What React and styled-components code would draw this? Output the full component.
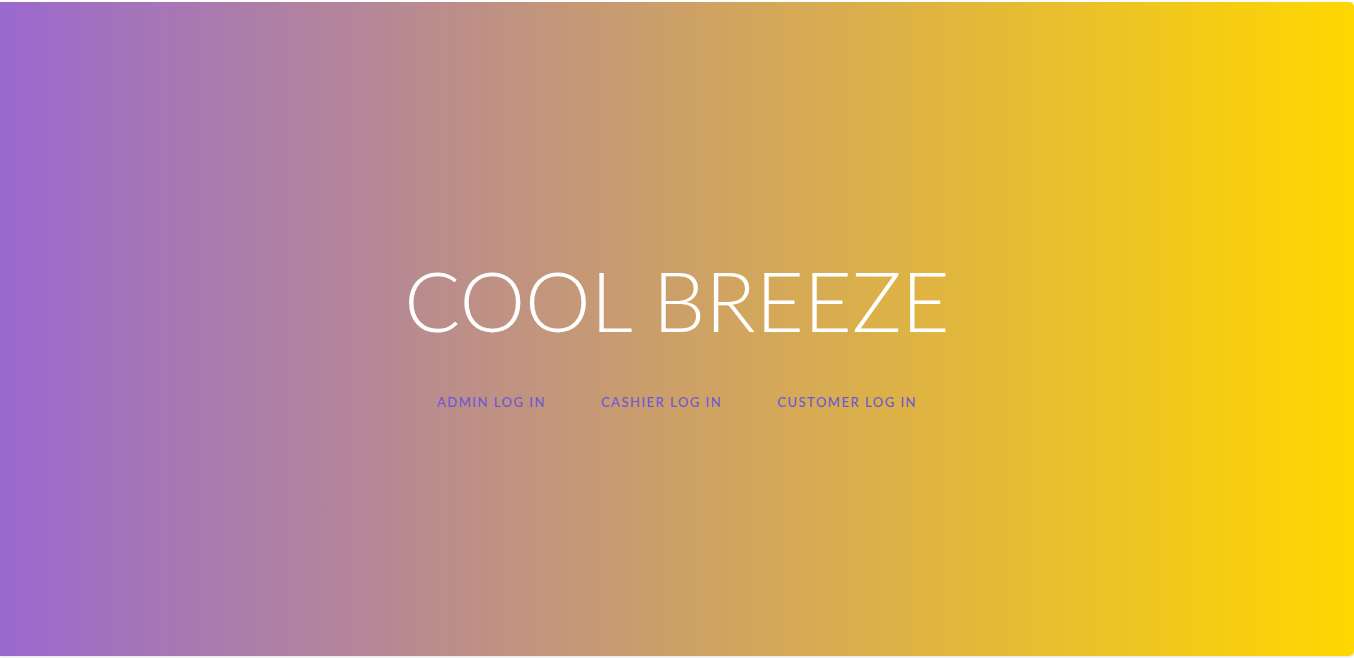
import React from "react";
import styled, { createGlobalStyle } from "styled-components";

const Global = createGlobalStyle`
  html, body { margin: 0; padding: 0; background: #ffffff; }
  body { font-family: "Lato", "Noto Sans", sans-serif; }
  * { box-sizing: border-box; }
`;

const Page = styled.div`
  padding: 2px 0 2px 0;
  height: 658px;
`;

const Card = styled.main`
  height: 654px;
  border-radius: 0 5px 5px 0;
  background: linear-gradient(to right, #9a69cf 0%, #ffd700 100%);
  box-shadow: 0 1px 3px rgba(0, 0, 0, 0.12);
  display: flex;
  flex-direction: column;
  align-items: center;
  justify-content: center;
  padding-top: 11px;
`;

const Title = styled.h1`
  margin: 0;
  font-family: "Lato", "Noto Sans", sans-serif;
  font-weight: 300;
  font-size: 83px;
  line-height: 1;
  color: #ffffff;
  letter-spacing: 0px;
`;

const Nav = styled.nav`
  display: flex;
  gap: 55px;
  margin-top: 52px;
`;

const NavLink = styled.a`
  font-family: "Lato", "Noto Sans", sans-serif;
  font-size: 13px;
  font-weight: 500;
  letter-spacing: 1.5px;
  color: #6e57d6;
  text-decoration: none;
  text-transform: uppercase;
  cursor: pointer;
`;

export default function App() {
  return (
    <>
      <Global />
      <Page>
        <Card>
          <Title>COOL BREEZE</Title>
          <Nav>
            <NavLink>Admin Log In</NavLink>
            <NavLink>Cashier Log In</NavLink>
            <NavLink>Customer Log In</NavLink>
          </Nav>
        </Card>
      </Page>
    </>
  );
}
